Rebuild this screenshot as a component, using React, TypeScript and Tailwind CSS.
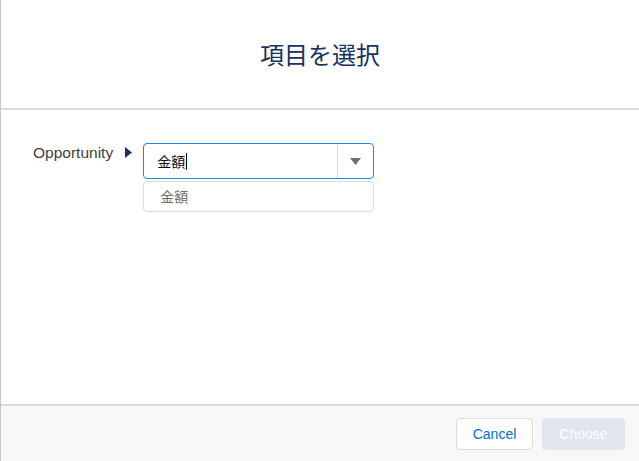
import React from "react";

export default function App() {
  const font = { fontFamily: '"Liberation Sans", "Noto Sans CJK JP", sans-serif' };
  return (
    <div
      className="w-[639px] h-[461px] flex flex-col bg-white border-l border-[#c9c9c9] overflow-hidden"
      style={font}
    >
      <div className="h-[110px] shrink-0 flex items-center justify-center border-b-2 border-[#dddbda]">
        <h1
          className="text-[24px] leading-none text-[#16325c]"
          style={{ fontFamily: '"Noto Sans CJK JP", sans-serif' }}
        >
          項目を選択
        </h1>
      </div>
      <div className="flex-1 flex pt-[33px] pl-[32px]">
        <div className="flex items-start">
          <span className="text-[15.5px] leading-none text-[#3e3e3c] mt-[2px]">Opportunity</span>
          <svg className="ml-[12px] mt-[4px]" width="7" height="11" viewBox="0 0 7 11">
            <path d="M0 0 L7 5.5 L0 11 Z" fill="#16325c" />
          </svg>
          <div className="ml-[11px] w-[231px] flex flex-col gap-[2px]">
            <div className="h-[36px] flex items-center border border-[#1589ee] rounded-[4px] bg-white">
              <span
                className="pl-[13px] text-[14px] text-[#080707] flex items-center flex-1"
                style={{ fontFamily: '"Noto Sans CJK JP", sans-serif' }}
              >
                金額
                <span className="w-[1px] h-[17px] bg-[#080707] ml-[1px]" />
              </span>
              <div className="w-[1px] self-stretch bg-[#dddbda]" />
              <div className="w-[35px] flex items-center justify-center">
                <svg width="11" height="7" viewBox="0 0 11 7">
                  <path d="M0 0 L11 0 L5.5 7 Z" fill="#706e6b" />
                </svg>
              </div>
            </div>
            <div
              className="h-[31px] flex items-center border border-[#dddbda] rounded-[4px] pl-[16px] text-[14px] text-[#706e6b]"
              style={{ fontFamily: '"Noto Sans CJK JP", sans-serif' }}
            >
              金額
            </div>
          </div>
        </div>
      </div>
      <div className="h-[57px] shrink-0 bg-[#f8f8f8] border-t-2 border-[#dddbda] flex items-center justify-end gap-[9px] pr-[14px] pt-[1px]">
        <button className="w-[77px] h-[32px] rounded-[4px] border border-[#dddbda] bg-white text-[14px] text-[#0070d2]">
          Cancel
        </button>
        <button className="w-[83px] h-[32px] rounded-[4px] bg-[#e0e5ee] text-[14px] text-white">
          Choose
        </button>
      </div>
    </div>
  );
}
